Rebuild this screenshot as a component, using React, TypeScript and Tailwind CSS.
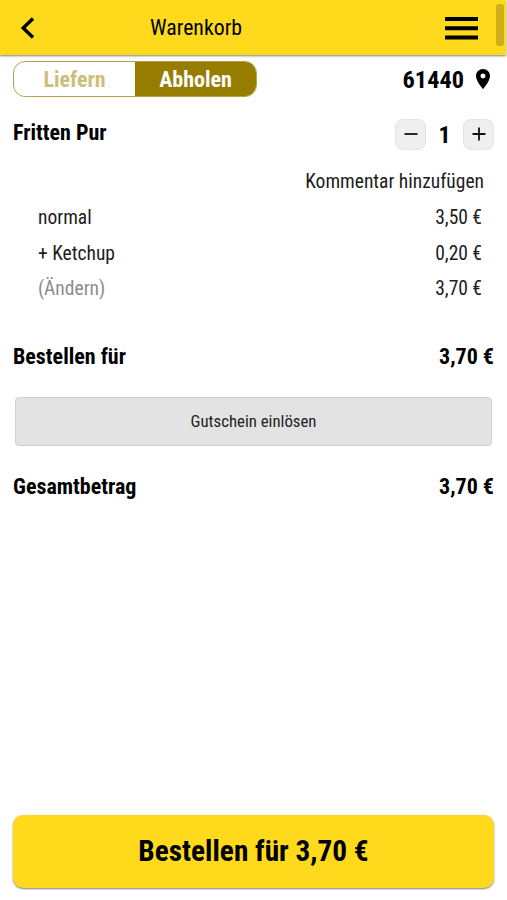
import type { ReactNode } from "react";

function Row({ label, price, muted = false }: { label: string; price: string; muted?: boolean }) {
  return (
    <div className="flex h-[35.5px] items-center justify-between pr-[25px] pl-[38px] text-[19.5px] text-[#1c1c1c]">
      <span className={muted ? "text-[#8c8c8c]" : ""}>{label}</span>
      <span>{price}</span>
    </div>
  );
}

function Total({ label, price }: { label: string; price: string }) {
  return (
    <div className="flex h-8 items-center justify-between px-[13px] text-[22px] font-bold">
      <span>{label}</span>
      <span>{price}</span>
    </div>
  );
}

function StepButton({ label, children }: { label: string; children: ReactNode }) {
  return (
    <button aria-label={label} className="flex h-[31px] w-[31px] items-center justify-center rounded-[8px] border border-[#e2e2e2] bg-[#efefef]">
      <svg width="14" height="14" viewBox="0 0 14 14" stroke="#111" strokeWidth="1.8" fill="none">{children}</svg>
    </button>
  );
}

export default function App() {
  return (
    <div className="flex h-[900px] w-[507px] flex-col overflow-hidden bg-white font-['Roboto_Condensed','Roboto',sans-serif] text-black [font-stretch:condensed]">
      <header className="relative mr-px flex h-[55px] shrink-0 items-center bg-[#ffda1c] pt-px pr-[28px] pl-[20px] shadow-[0_1px_2px_rgba(0,0,0,0.5)]">
        <svg width="14" height="22" viewBox="0 0 14 22" fill="none" stroke="#000" strokeWidth="3.4">
          <path d="M13 1.5 3.2 11 13 20.5" />
        </svg>
        <h1 className="ml-[116px] pt-px text-[21.8px]">Warenkorb</h1>
        <svg className="ml-auto" width="33" height="23" viewBox="0 0 33 23" fill="#000">
          <path d="M0 0h33v4H0zM0 9.200h33v4H0zM0 18.400h33v4H0z" />
        </svg>
        <div className="absolute top-1 right-[2px] h-[42px] w-[8px] rounded-[3px] bg-[#cfb01b]" />
      </header>
      <div className="mt-[6px] flex h-[36px] shrink-0 items-center justify-between pr-[17px] pl-[13px]">
        <div className="flex h-[36px] w-[244px] overflow-hidden rounded-[12px] border border-[#b8a24a] text-[22px] font-bold">
          <button className="flex-1 text-[#cdbe7c]">Liefern</button>
          <button className="flex-1 bg-[#967d00] text-white">Abholen</button>
        </div>
        <div className="flex items-center gap-[11px] text-[24.3px] font-bold">
          <span className="mt-0.5 mr-px">61440</span>
          <svg width="14" height="20" viewBox="5 2 14 20" preserveAspectRatio="none">
            <path d="M12 2C8.13 2 5 5.13 5 9c0 5.25 7 13 7 13s7-7.750 7-13c0-3.870-3.130-7-7-7zm0 9.500a2.500 2.500 0 0 1 0-5 2.500 2.500 0 0 1 0 5z" />
          </svg>
        </div>
      </div>
      <section>
        <div className="mt-[21px] flex h-[32px] items-center justify-between px-[13px] text-[22px] font-bold">
          <span className="mb-1">Fritten Pur</span>
          <div className="flex items-center">
            <StepButton label="Weniger"><path d="M0.500 7h13" /></StepButton>
            <span className="w-[37px] pt-0.5 text-center text-[24px]">1</span>
            <StepButton label="Mehr"><path d="M0.500 7h13M7 0.500v13" /></StepButton>
          </div>
        </div>
        <div className="mt-[14px] flex h-9 items-center justify-end pr-[23px] text-[19.5px] text-[#1c1c1c]">Kommentar hinzufügen</div>
        <Row label="normal" price="3,50 €" />
        <Row label="+ Ketchup" price="0,20 €" />
        <Row label="(Ändern)" price="3,70 €" muted />
      </section>
      <div className="mt-[34px]"><Total label="Bestellen für" price="3,70 €" /></div>
      <button className="mx-[15px] mt-[24px] h-[49px] shrink-0 rounded-[4px] border border-[#d0d0d0] bg-[#e3e3e3] pt-0.5 text-[16.8px] text-[#222]">Gutschein einlösen</button>
      <div className="mt-[25px]"><Total label="Gesamtbetrag" price="3,70 €" /></div>
      <button className="mx-[13px] mt-auto mb-[12px] h-[73px] shrink-0 rounded-[10px] bg-[#ffda1c] text-[29.3px] font-bold shadow-[0_1px_2px_rgba(0,0,0,0.5)]">Bestellen für 3,70 €</button>
    </div>
  );
}
